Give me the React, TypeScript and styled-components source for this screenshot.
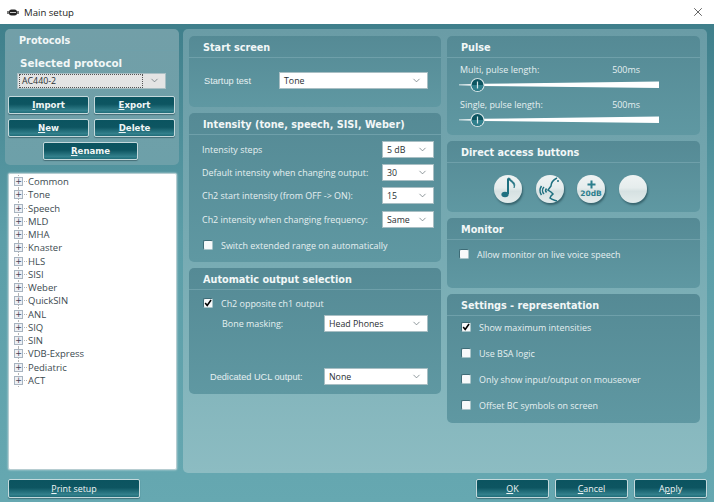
import styled, { createGlobalStyle } from "styled-components";
import type { FC, ReactNode } from "react";
import { ChevronDown, X } from "lucide-react";

const TREE_ITEMS = ["Common", "Tone", "Speech", "MLD", "MHA", "Knaster", "HLS", "SISI", "Weber", "QuickSIN", "ANL", "SIQ", "SIN", "VDB-Express", "Pediatric", "ACT"];

const GlobalStyle = createGlobalStyle`
  html, body { margin: 0; padding: 0; background: #fff; }
  body { font-family: "Open Sans", Verdana, sans-serif; }
`;

const Window = styled.div`
  width: 714px;
  height: 502px;
  overflow: hidden;
  display: flex;
  flex-direction: column;
`;
const TitleBar = styled.div`
  height: 24px;
  flex: none;
  display: flex;
  align-items: center;
  padding: 0 9px 0 7px;
  background: #fff;
  color: #222;
  font: 9.6px "Open Sans", sans-serif;
  gap: 5px;
`;
const TitleText = styled.span`
  flex: 1;
`;
const Body = styled.div`
  flex: 1;
  display: flex;
  flex-direction: column;
  background: linear-gradient(180deg, #3f7f8b 0%, #5c9ea8 45%, #66a8b1 100%);
  padding: 5px 7px 5px 5px;
`;
const Columns = styled.div`
  height: 444px;
  display: flex;
  gap: 4px;
`;
const LeftColumn = styled.div`
  width: 174px;
  display: flex;
  flex-direction: column;
  gap: 8px;
`;
const Panel = styled.section<{ $height: number }>`
  height: ${p => p.$height}px;
  flex: none;
  box-sizing: border-box;
  border-radius: 5px;
  background: linear-gradient(180deg, #558a95 0%, #5f98a2 100%);
`;
const ProtocolsPanel = styled(Panel)`
  background: linear-gradient(180deg, #729fa8 0%, #6da0a9 100%);
`;
const PanelHeader = styled.h2`
  margin: 0;
  height: 22px;
  box-sizing: border-box;
  display: flex;
  align-items: center;
  padding: 2px 0 0 14px;
  border-bottom: 1px solid #6fa0aa;
  color: #f2f7f7;
  font: bold 9.7px "DejaVu Sans", sans-serif;
`;
const SelectedTitle = styled.h3`
  margin: 5px 0 1px 15px;
  color: #f2f7f7;
  font: bold 10.3px "DejaVu Sans", sans-serif;
  line-height: 15px;
`;
const ButtonGrid = styled.div`
  display: grid;
  grid-template-columns: 81px 81px;
  gap: 5px;
  padding: 7px 0 0 3px;
`;
const ActionButton = styled.button<{ $width?: number; $bold?: boolean }>`
  width: ${p => (p.$width ? `${p.$width}px` : "100%")};
  height: 18px;
  padding: 0;
  box-sizing: border-box;
  border: 1px solid #c4d9dc;
  border-radius: 2px;
  background: linear-gradient(180deg, #0b5460 0%, #0d5561 45%, #33808c 85%, #1f6c78 100%);
  box-shadow: 0 1px 1px rgba(30, 60, 70, 0.5);
  color: #f0f6f6;
  font: ${p => (p.$bold ? "bold 8.6px \"DejaVu Sans\"" : "8.9px \"Open Sans\"")}, sans-serif;
  u { text-decoration-thickness: 1px; text-underline-offset: 1px; }
`;
const CenterRow = styled.div`
  display: flex;
  justify-content: center;
  padding: 5px 3px 0 0;
`;
const TreeBox = styled.div`
  height: 297px;
  margin: 0 2px 0 3px;
  padding-top: 1px;
  box-sizing: border-box;
  background: #fff;
  border: 1px solid #b6cdd1;
  border-radius: 2px;
  box-shadow: 0 0 2px #d5e4e6;
`;
const TreeRow = styled.div`
  height: 13.25px;
  display: flex;
  align-items: center;
  padding-left: 5px;
  color: #3c4a50;
  font: 9.5px "Open Sans", sans-serif;
  position: relative;
  &::before {
    content: "";
    position: absolute;
    left: 9px;
    top: 0;
    bottom: 0;
    border-left: 1px dotted #b5b5b5;
  }
`;
const Expander = styled.span`
  width: 7px;
  height: 7px;
  flex: none;
  border: 1px solid #a8b4c0;
  background: #eef1f5;
  color: #445;
  font: 8px/7px "DejaVu Sans", sans-serif;
  text-align: center;
  margin-right: 1px;
  position: relative;
  z-index: 1;
`;
const TreeDash = styled.span`
  width: 3px;
  margin-right: 1px;
  border-top: 1px dotted #b5b5b5;
`;
const Main = styled.div`
  flex: 1;
  display: flex;
  gap: 6px;
  padding: 7px 7px 0 6px;
  border-radius: 5px;
  background: linear-gradient(180deg, #6a9ca6 0%, #77abb3 50%, #8cbcc2 100%);
`;
const MainColumn = styled.div<{ $width: number }>`
  width: ${p => p.$width}px;
  flex: none;
  display: flex;
  flex-direction: column;
  gap: 6px;
`;
const FieldRow = styled.div<{ $left: number; $right: number; $top: number }>`
  display: flex;
  align-items: center;
  justify-content: space-between;
  height: 17px;
  padding: 0 ${p => p.$right}px 0 ${p => p.$left}px;
  margin-top: ${p => p.$top}px;
`;
const Label = styled.label<{ $sans?: boolean }>`
  color: #e6f0f1;
  font: ${p => (p.$sans ? "9.2px \"Liberation Sans\"" : "8.95px \"Open Sans\"")}, sans-serif;
  white-space: nowrap;
`;
const SelectBox = styled.div<{ $width: number; $dim?: boolean }>`
  width: ${p => p.$width}px;
  height: ${p => (p.$dim ? 16 : 17)}px;
  flex: none;
  box-sizing: border-box;
  display: flex;
  align-items: center;
  justify-content: space-between;
  padding: 0 5px 0 4px;
  background: ${p => (p.$dim ? "#e4e4e4" : "#fff")};
  border: 1px solid #a9bfc4;
  color: #2a2f33;
  font: 8.8px "Open Sans", sans-serif;
  svg { color: #5d6a70; }
`;
const FocusValue = styled.span`
  flex: 1;
  margin: 0 6px 0 -3px;
  padding-left: 2px;
  line-height: 12px;
  border: 1px dotted #555;
`;
const CheckRow = styled.div<{ $left: number; $top: number }>`
  display: flex;
  align-items: center;
  gap: 8px;
  height: 12px;
  padding-left: ${p => p.$left}px;
  margin-top: ${p => p.$top}px;
`;
const CheckBox = styled.span`
  width: 10px;
  height: 10px;
  flex: none;
  display: flex;
  align-items: center;
  justify-content: center;
  box-sizing: border-box;
  border-radius: 2px;
  background: #f7f9fa;
  border: 1px solid #3e6c77;
  border-right-color: #a9c4c9;
  border-bottom-color: #a9c4c9;
`;
const SliderLabels = styled.div<{ $top: number }>`
  display: flex;
  justify-content: space-between;
  width: 180px;
  padding-left: 13px;
  margin-top: ${p => p.$top}px;
  height: 12px;
  align-items: center;
`;
const SliderLine = styled.svg`
  display: block;
  margin: 2px 0 0 12px;
`;
const RoundRow = styled.div`
  display: flex;
  gap: 13.5px;
  padding: 12px 0 0 47px;
`;
const RoundButton = styled.button`
  width: 28px;
  height: 28px;
  padding: 0;
  flex: none;
  border: none;
  border-radius: 50%;
  display: flex;
  flex-direction: column;
  align-items: center;
  justify-content: center;
  background: linear-gradient(180deg, #eff3f3 0%, #e6eded 45%, #d6e1e2 58%, #e3ebeb 100%);
  box-shadow: 1px 2px 2px rgba(25, 60, 70, 0.55);
  color: #2d7f8d;
  font: bold 7.5px/8px "DejaVu Sans", sans-serif;
`;
const PlusMark = styled.svg`
  display: block;
  margin-bottom: 1px;
`;
const Footer = styled.div`
  display: flex;
  gap: 6px;
  padding: 6px 0 0 3px;
`;
const FooterSpacer = styled.div`
  flex: 1;
`;
const FooterButton = styled(ActionButton)`
  height: 19px;
`;

const Select: FC<{ value: string; width: number; dim?: boolean }> = ({ value, width, dim }) => (
  <SelectBox $width={width} $dim={dim}>
    {dim ? <FocusValue>{value}</FocusValue> : value}
    <ChevronDown size={11} strokeWidth={1.5} />
  </SelectBox>
);

const Check: FC<{ checked?: boolean; left: number; top: number; children: ReactNode }> = ({ checked, left, top, children }) => (
  <CheckRow $left={left} $top={top}>
    <CheckBox>
      {checked && (
        <svg width="10" height="10" viewBox="0 0 10 10">
          <path d="M1.5 5 L4 8 L8.8 1.2" fill="none" stroke="#000" strokeWidth="2" />
        </svg>
      )}
    </CheckBox>
    <Label>{children}</Label>
  </CheckRow>
);

const Slider: FC = () => (
  <SliderLine width="202" height="16" viewBox="0 0 202 16">
    <polygon points="0,7.5 24,6.8 200,4.5 200,11 24,9 0,8.2" fill="#fff" />
    <circle cx="18.5" cy="8" r="6.5" fill="#0d5561" stroke="#d5e4e6" strokeWidth="1.2" />
    <path d="M12.5 8 A6 6 0 0 0 24.5 8 Z" fill="#2f7f8c" />
    <line x1="18.5" y1="4.5" x2="18.5" y2="11.5" stroke="#d9e8ea" strokeWidth="1.2" />
  </SliderLine>
);

const App: FC = () => (
  <Window>
    <GlobalStyle />
    <TitleBar>
      <svg width="12" height="7" viewBox="0 0 12 7">
        <rect x="2" y="0.5" width="8" height="6" rx="2.5" fill="#222" />
        <rect x="0" y="2" width="2" height="3" fill="#777" />
        <rect x="10" y="2" width="2" height="3" fill="#777" />
        <path d="M3 3.5 H9" stroke="#ccc" />
      </svg>
      <TitleText>Main setup</TitleText>
      <X size={14} strokeWidth={1.2} color="#222" />
    </TitleBar>
    <Body>
      <Columns>
        <LeftColumn>
          <ProtocolsPanel $height={136}>
            <PanelHeader>Protocols</PanelHeader>
            <SelectedTitle>Selected protocol</SelectedTitle>
            <FieldRow $left={12} $right={13} $top={0}>
              <Select value="AC440-2" width={149} dim />
            </FieldRow>
            <ButtonGrid>
              <ActionButton $bold><u>I</u>mport</ActionButton>
              <ActionButton $bold><u>E</u>xport</ActionButton>
              <ActionButton $bold><u>N</u>ew</ActionButton>
              <ActionButton $bold><u>D</u>elete</ActionButton>
            </ButtonGrid>
            <CenterRow>
              <ActionButton $bold $width={95}><u>R</u>ename</ActionButton>
            </CenterRow>
          </ProtocolsPanel>
          <TreeBox>
            {TREE_ITEMS.map(item => (
              <TreeRow key={item}>
                <Expander>+</Expander>
                <TreeDash />
                {item}
              </TreeRow>
            ))}
          </TreeBox>
        </LeftColumn>
        <Main>
          <MainColumn $width={252}>
            <Panel $height={71}>
              <PanelHeader>Start screen</PanelHeader>
              <FieldRow $left={15} $right={13} $top={14}>
                <Label $sans>Startup test</Label>
                <Select value="Tone" width={149} />
              </FieldRow>
            </Panel>
            <Panel $height={149}>
              <PanelHeader>Intensity (tone, speech, SISI, Weber)</PanelHeader>
              <FieldRow $left={13} $right={7} $top={6}>
                <Label>Intensity steps</Label>
                <Select value="5 dB" width={52} />
              </FieldRow>
              <FieldRow $left={13} $right={7} $top={6}>
                <Label>Default intensity when changing output:</Label>
                <Select value="30" width={52} />
              </FieldRow>
              <FieldRow $left={13} $right={7} $top={6}>
                <Label>Ch2 start intensity (from OFF -&gt; ON):</Label>
                <Select value="15" width={52} />
              </FieldRow>
              <FieldRow $left={13} $right={7} $top={7}>
                <Label>Ch2 intensity when changing frequency:</Label>
                <Select value="Same" width={52} />
              </FieldRow>
              <Check left={14} top={11}>Switch extended range on automatically</Check>
            </Panel>
            <Panel $height={126}>
              <PanelHeader>Automatic output selection</PanelHeader>
              <Check checked left={14} top={7}>Ch2 opposite ch1 output</Check>
              <FieldRow $left={33} $right={13} $top={6}>
                <Label>Bone masking:</Label>
                <Select value="Head Phones" width={104} />
              </FieldRow>
              <FieldRow $left={21} $right={13} $top={36}>
                <Label $sans>Dedicated UCL output:</Label>
                <Select value="None" width={104} />
              </FieldRow>
            </Panel>
          </MainColumn>
          <MainColumn $width={253}>
            <Panel $height={99}>
              <PanelHeader>Pulse</PanelHeader>
              <SliderLabels $top={5}>
                <Label>Multi, pulse length:</Label>
                <Label>500ms</Label>
              </SliderLabels>
              <Slider />
              <SliderLabels $top={5}>
                <Label>Single, pulse length:</Label>
                <Label>500ms</Label>
              </SliderLabels>
              <Slider />
            </Panel>
            <Panel $height={71}>
              <PanelHeader>Direct access buttons</PanelHeader>
              <RoundRow>
                <RoundButton aria-label="Tone">
                  <svg width="28" height="28" viewBox="0 0 28 28">
                    <path d="M14 3.5 V19" stroke="#1f7080" strokeWidth="2" fill="none" />
                    <ellipse cx="11" cy="19.5" rx="3.6" ry="2.8" fill="#1f7080" />
                    <path d="M14 3 C15 7 21 7 20 13 C23 7 17 6 15.5 3 Z" fill="#1f7080" stroke="#1f7080" strokeWidth="0.6" />
                  </svg>
                </RoundButton>
                <RoundButton aria-label="Speech">
                  <svg width="28" height="28" viewBox="0 0 28 28" fill="none" stroke="#1f7080" strokeWidth="1.5">
                    <path d="M21 3 C17 5 15 8 15 11 L12 15 L15 17 L17 19 L15 21 L14 23 C16 25 19 25 21 26" />
                    <circle cx="22" cy="6" r="1" fill="#1f7080" stroke="none" />
                    <path d="M8 12 A5 5 0 0 0 8 19 M5.5 11 A8 8 0 0 0 5.5 20 M10.5 13.5 A3 3 0 0 0 10.5 17.5" />
                  </svg>
                </RoundButton>
                <RoundButton aria-label="Plus 20 dB">
                  <PlusMark width="9" height="9" viewBox="0 0 9 9">
                    <path d="M4.5 0.5 V8.5 M0.5 4.5 H8.5" stroke="#2d7f8d" strokeWidth="2" />
                  </PlusMark>
                  20dB
                </RoundButton>
                <RoundButton aria-label="Empty" />
              </RoundRow>
            </Panel>
            <Panel $height={70}>
              <PanelHeader>Monitor</PanelHeader>
              <Check left={12} top={8}>Allow monitor on live voice speech</Check>
            </Panel>
            <Panel $height={129}>
              <PanelHeader>Settings - representation</PanelHeader>
              <Check checked left={14} top={5}>Show maximum intensities</Check>
              <Check left={14} top={14}>Use BSA logic</Check>
              <Check left={14} top={14}>Only show input/output on mouseover</Check>
              <Check left={14} top={14}>Offset BC symbols on screen</Check>
            </Panel>
          </MainColumn>
        </Main>
      </Columns>
      <Footer>
        <FooterButton $width={132}><u>P</u>rint setup</FooterButton>
        <FooterSpacer />
        <FooterButton $width={73}><u>O</u>K</FooterButton>
        <FooterButton $width={73}><u>C</u>ancel</FooterButton>
        <FooterButton $width={73}>A<u>p</u>ply</FooterButton>
      </Footer>
    </Body>
  </Window>
);

export default App;
